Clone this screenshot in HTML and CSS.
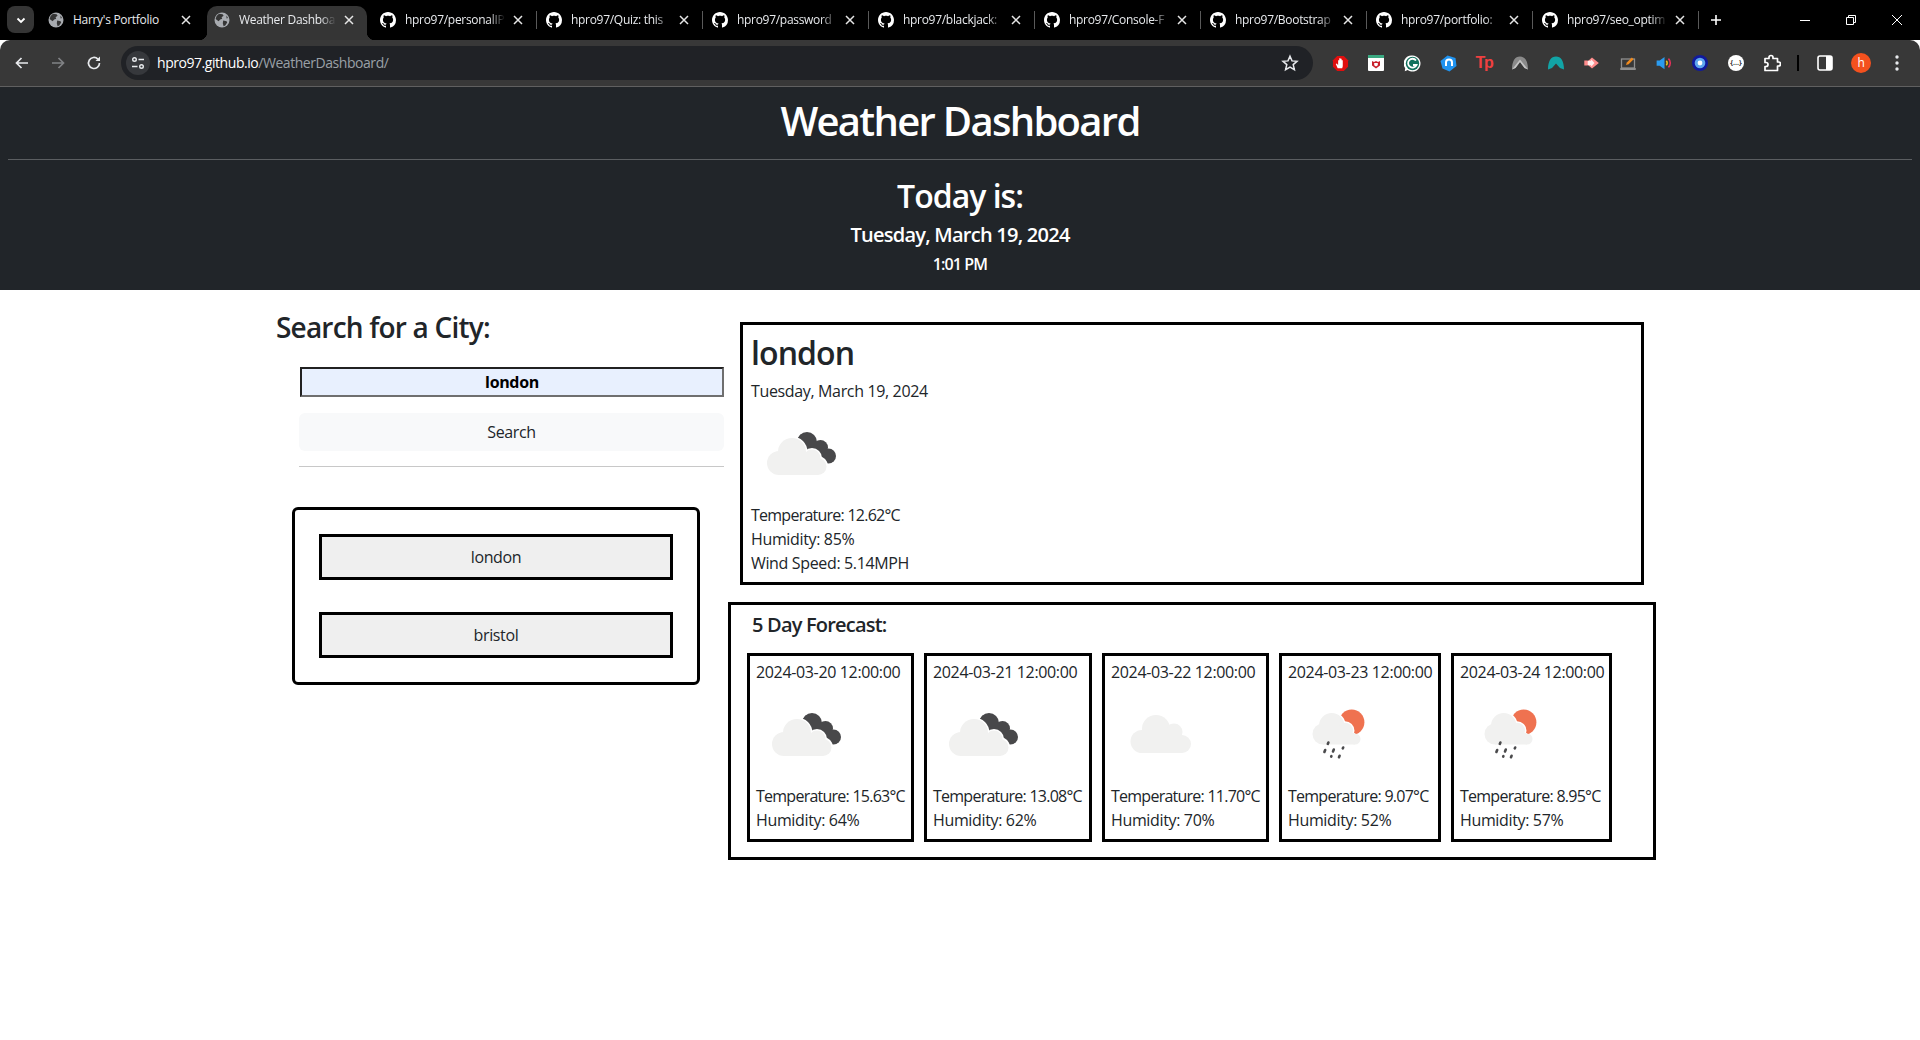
FILE: index.html
```html
<!DOCTYPE html>
<html lang="en">
<head>
    <meta charset="UTF-8">
    <meta name="viewport" content="width=device-width, initial-scale=1.0">
    <title>Weather Dashboard</title>
    <link rel="stylesheet" href="styles.css">
</head>
<body>

    <!-- Shared icons -->
    <svg class="defs" width="0" height="0">
        <symbol id="github" viewBox="0 0 16 16"><path fill="#fff" d="M8 0C3.58 0 0 3.58 0 8c0 3.54 2.29 6.53 5.47 7.59.4.07.55-.17.55-.38 0-.19-.01-.82-.01-1.49-2.01.37-2.53-.49-2.69-.94-.09-.23-.48-.94-.82-1.13-.28-.15-.68-.52-.01-.53.63-.01 1.08.58 1.23.82.72 1.21 1.87.87 2.33.66.07-.52.28-.87.51-1.07-1.78-.2-3.64-.89-3.64-3.95 0-.87.31-1.59.82-2.15-.08-.2-.36-1.02.08-2.12 0 0 .67-.21 2.2.82.64-.18 1.32-.27 2-.27.68 0 1.36.09 2 .27 1.53-1.04 2.2-.82 2.2-.82.44 1.1.16 1.92.08 2.12.51.56.82 1.27.82 2.15 0 3.07-1.87 3.75-3.65 3.95.29.25.54.73.54 1.48 0 1.07-.01 1.93-.01 2.2 0 .21.15.46.55.38A8.013 8.013 0 0016 8c0-4.42-3.58-8-8-8z"/></symbol>
        <symbol id="globe" viewBox="0 0 16 16"><circle cx="8" cy="8" r="7.5" fill="#a8abb0"/><path fill="#353535" d="M5 1.8l3.6.4 1 1.6-2 1.4.6 1.6-2 .6-1.6 1.8L1.6 7l1-3zM9.2 8.6l3.4.6.6 1.4-2 3-1.6.6-.8-3zM12.4 3.6l1.6 2.4-1.4.4z"/></symbol>
        <symbol id="close" viewBox="0 0 10 10"><path d="M1 1l8 8M9 1l-8 8" stroke="#e6e6e6" stroke-width="1.5" fill="none"/></symbol>
        <symbol id="clouds" viewBox="0 0 100 100">
            <g fill="#48484a"><circle cx="56" cy="38" r="10"/><circle cx="69.500" cy="43.500" r="7.500"/><circle cx="77.500" cy="52" r="7.500"/><path d="M50 30L66 38 75 47 82 56 60 62 47 34z"/></g>
            <g fill="#fff"><circle cx="41" cy="48" r="15.500"/><circle cx="61" cy="54" r="10"/><circle cx="67" cy="62" r="10"/></g>
            <g fill="#f1f1f0"><circle cx="28" cy="59" r="12"/><circle cx="41" cy="48" r="14"/><circle cx="61" cy="54" r="8.500"/><circle cx="67" cy="62.500" r="8.500"/><rect x="28" y="55" width="39" height="16"/></g>
        </symbol>
        <symbol id="cloud" viewBox="0 0 100 100">
            <g fill="#f1f1f0"><circle cx="31" cy="56.500" r="11.500"/><circle cx="45" cy="44" r="14"/><circle cx="63" cy="47" r="8.500"/><circle cx="71" cy="59" r="9"/><rect x="31" y="50" width="40" height="18"/></g>
        </symbol>
        <symbol id="rain" viewBox="0 0 100 100">
            <circle cx="63.700" cy="37.300" r="12.700" fill="#ef7250"/>
            <g fill="#fff"><circle cx="43.700" cy="40.700" r="14"/><circle cx="57" cy="45.700" r="9.500"/></g>
            <g fill="#f1f1f0"><circle cx="35" cy="49" r="10.500"/><circle cx="43.700" cy="40.700" r="12.700"/><circle cx="57" cy="45.700" r="8"/><circle cx="67" cy="54" r="5.500"/><rect x="35" y="48" width="32" height="11.500"/></g>
            <g stroke="#4a4a4c" stroke-width="2.600" stroke-linecap="round"><path d="M40.400 57.500l-.6 1.400M37.200 65l-.8 2M45.800 64.500l-.8 2M55.200 62.500l-.4.800M43.400 71.200l-.2.400M51.600 70.800l-.6 1.400"/></g>
        </symbol>
    </svg>

    <!-- Browser tabs -->
    <div class="tabstrip">
        <div class="tab-search"><svg width="10" height="10" viewBox="0 0 10 10"><path d="M1.500 3.500L5 7l3.500-3.500" stroke="#fff" stroke-width="1.800" fill="none"/></svg></div>
        <div class="tab tab-first">
            <svg class="fav"><use href="#globe"/></svg><span class="tab-title">Harry's Portfolio</span><svg class="tab-close"><use href="#close"/></svg>
        </div>
        <div class="sep sep-clear"></div>
        <div class="tab tab-active">
            <svg class="fav"><use href="#globe"/></svg><span class="tab-title">Weather Dashboa</span><svg class="tab-close"><use href="#close"/></svg>
        </div>
        <div class="sep sep-clear"></div>
        <div class="tab"><svg class="fav"><use href="#github"/></svg><span class="tab-title">hpro97/personalIP</span><svg class="tab-close"><use href="#close"/></svg></div>
        <div class="sep"></div>
        <div class="tab"><svg class="fav"><use href="#github"/></svg><span class="tab-title">hpro97/Quiz: this</span><svg class="tab-close"><use href="#close"/></svg></div>
        <div class="sep"></div>
        <div class="tab"><svg class="fav"><use href="#github"/></svg><span class="tab-title">hpro97/password</span><svg class="tab-close"><use href="#close"/></svg></div>
        <div class="sep"></div>
        <div class="tab"><svg class="fav"><use href="#github"/></svg><span class="tab-title">hpro97/blackjack:</span><svg class="tab-close"><use href="#close"/></svg></div>
        <div class="sep"></div>
        <div class="tab"><svg class="fav"><use href="#github"/></svg><span class="tab-title">hpro97/Console-F</span><svg class="tab-close"><use href="#close"/></svg></div>
        <div class="sep"></div>
        <div class="tab"><svg class="fav"><use href="#github"/></svg><span class="tab-title">hpro97/Bootstrap</span><svg class="tab-close"><use href="#close"/></svg></div>
        <div class="sep"></div>
        <div class="tab"><svg class="fav"><use href="#github"/></svg><span class="tab-title">hpro97/portfolio:</span><svg class="tab-close"><use href="#close"/></svg></div>
        <div class="sep"></div>
        <div class="tab"><svg class="fav"><use href="#github"/></svg><span class="tab-title">hpro97/seo_optim</span><svg class="tab-close"><use href="#close"/></svg></div>
        <div class="sep"></div>
        <div class="tab-new"><svg width="12" height="12" viewBox="0 0 12 12"><path d="M6 1v10M1 6h10" stroke="#fff" stroke-width="1.600"/></svg></div>
        <div class="window-controls">
            <svg width="46" height="12" viewBox="0 0 46 12"><path d="M18 6.500h10" stroke="#fff"/></svg>
            <svg width="46" height="12" viewBox="0 0 46 12"><path d="M18.500 3.500h7v7h-7zM20.500 3.500v-2h7v7h-2" stroke="#fff" fill="none"/></svg>
            <svg width="46" height="12" viewBox="0 0 46 12"><path d="M18 1l10 10M28 1L18 11" stroke="#fff" fill="none"/></svg>
        </div>
    </div>

    <!-- Browser toolbar -->
    <div class="toolbar">
        <div class="slot"><svg width="16" height="16" viewBox="0 0 16 16"><path d="M14 8H3M7.500 3L2.500 8l5 5" stroke="#e8eaed" stroke-width="1.700" fill="none"/></svg></div>
        <div class="slot"><svg width="16" height="16" viewBox="0 0 16 16"><path d="M2 8h11M8.500 3l5 5-5 5" stroke="#808285" stroke-width="1.700" fill="none"/></svg></div>
        <div class="slot"><svg width="16" height="16" viewBox="0 0 16 16"><path d="M13.500 8a5.500 5.500 0 1 1-1.600-3.900" stroke="#e8eaed" stroke-width="1.700" fill="none"/><path d="M14 1.500v4.500H9.500z" fill="#e8eaed"/></svg></div>
        <div class="address">
            <div class="site-chip"><svg width="14" height="14" viewBox="0 0 14 14"><g stroke="#e8eaed" stroke-width="1.400" fill="none"><circle cx="3.500" cy="3.500" r="1.800"/><path d="M7.500 3.500H13M1 10.500h5.500"/><circle cx="10.500" cy="10.500" r="1.800"/></g></svg></div>
            <span class="url">hpro97.github.io<span class="url-path">/WeatherDashboard/</span></span>
            <svg class="star" width="18" height="18" viewBox="0 0 18 18"><path d="M9 2.200l2 4.700 5 .4-3.800 3.300 1.200 5L9 13l-4.400 2.600 1.200-5L2 7.300l5-.4z" stroke="#e8eaed" stroke-width="1.500" fill="none"/></svg>
        </div>
        <div class="extensions">
            <div class="slot"><svg width="17" height="17" viewBox="0 0 18 18"><path d="M5.500 1h7L17 5.500v7L12.500 17h-7L1 12.500v-7z" fill="#e00f0f"/><path d="M6 14L4 9.500l1.200-.5 1.300 1.800V5.500h1.200V8.500V3.500H9v5V4h1.200v4.500-3h1.200v6.500L10.800 14z" fill="#fff"/></svg></div>
            <div class="slot"><svg width="16" height="16" viewBox="0 0 16 16"><rect width="16" height="16" rx="1" fill="#fff"/><rect width="16" height="3" fill="#3aa981"/><path d="M4 6l2 1 2-1 2 1 2-1v4.500L8 13.500 4 10.500z" fill="#c8202b"/><path d="M6.200 8h3.600v2.200L8 11.500 6.200 10.200z" fill="#fff"/></svg></div>
            <div class="slot"><svg width="17" height="17" viewBox="0 0 17 17"><path d="M8.500.5a8 8 0 1 1-4.800 14.400L.8 16.200l.4-3A8 8 0 0 1 8.500.5z" fill="#fff"/><circle cx="8.500" cy="8.500" r="6.700" fill="#11705c"/><path d="M12 5.500A4.400 4.400 0 1 0 12.500 10H9" stroke="#fff" stroke-width="1.800" fill="none"/></svg></div>
            <div class="slot"><svg width="17" height="17" viewBox="0 0 17 17"><path d="M7.500.5L15.500 3 16.500 11 9.500 16.500 2.500 13.500.5 6z" fill="#2093ef"/><path d="M6 11V7.500a3 3 0 0 1 6 0V11" stroke="#fff" stroke-width="2" fill="none"/></svg></div>
            <div class="slot"><span class="ext-tp">Tp</span></div>
            <div class="slot"><svg width="16" height="14" viewBox="0 0 16 14"><path d="M0 13.500C0 5 3 .5 8 .5S16 5 16 13.500L12.500 12 8 6 3.500 12z" fill="#8a8a8a"/><path d="M0 13.500L3.500 12 8 6l4.500 6 3.500 1.500L8 3.500z" fill="#c4c4c4"/></svg></div>
            <div class="slot"><svg width="16" height="14" viewBox="0 0 16 14"><path d="M0 13.500C0 5 3 .5 8 .5S16 5 16 13.500L12 12 8 7.500 4 12z" fill="#12a4a6"/></svg></div>
            <div class="slot"><svg width="16" height="12" viewBox="0 0 18 14"><path d="M0 4h4V5L9 0.500 17 7 9 13.500 4 9v1H0z" fill="#ff8c8c"/><path d="M4 4.500h4V2.500L12 7 8 11.500V9.500H4z" fill="#fff" fill-opacity=".85"/></svg></div>
            <div class="slot"><svg width="16" height="16" viewBox="0 0 16 16"><rect x="1.500" y="4" width="13" height="9" fill="none" stroke="#8f8f8f" stroke-width="1.300"/><rect x="0" y="13" width="16" height="2" rx="1" fill="#8f8f8f"/><path d="M6 10l.8-2.500 5-5 1.800 1.800-5 5z" fill="#f08a1d"/></svg></div>
            <div class="slot"><svg width="17" height="14" viewBox="0 0 18 16"><path d="M0 5h3.500L9 1v14L3.500 11H0z" fill="#2a9bf0"/><path d="M11 5.500a3.500 3.500 0 0 1 0 5" stroke="#f0c419" stroke-width="1.800" fill="none"/><path d="M13.500 3a7 7 0 0 1 0 10" stroke="#e8305b" stroke-width="1.800" fill="none"/></svg></div>
            <div class="slot"><svg width="16" height="16" viewBox="0 0 16 16"><circle cx="8" cy="8" r="8" fill="#101a9e"/><circle cx="8" cy="8" r="5.300" fill="#5ea7ee"/><circle cx="8" cy="8" r="2.400" fill="#fff"/></svg></div>
            <div class="slot"><span class="ext-dots">{...}</span></div>
            <div class="slot"><svg width="18" height="18" viewBox="0 0 18 18"><path d="M2 4.500h4V3.500a2 2 0 0 1 4 0v1h4.500V8h1a2 2 0 0 1 0 4h-1v4.500H2V12.500h1a2 2 0 0 0 0-4H2z" stroke="#fff" stroke-width="1.700" fill="none" stroke-linejoin="round"/></svg></div>
        </div>
        <div class="tool-divider"></div>
        <div class="slot"><svg width="16" height="16" viewBox="0 0 16 16"><rect x="1" y="1" width="14" height="14" rx="2" fill="none" stroke="#fff" stroke-width="1.600"/><rect x="9" y="1" width="6" height="14" fill="#fff"/></svg></div>
        <div class="slot"><span class="avatar">h</span></div>
        <div class="slot"><svg width="4" height="16" viewBox="0 0 4 16"><g fill="#e8eaed"><circle cx="2" cy="2" r="1.700"/><circle cx="2" cy="8" r="1.700"/><circle cx="2" cy="14" r="1.700"/></g></svg></div>
    </div>

    <!-- Page header -->
    <header class="page-header">
        <h1>Weather Dashboard</h1>
        <hr>
        <h2>Today is:</h2>
        <p class="today-date">Tuesday, March 19, 2024</p>
        <p class="today-time">1:01 PM</p>
    </header>

    <main class="content">
        <!-- Search column -->
        <section class="search-col">
            <h3>Search for a City:</h3>
            <form class="search-form">
                <input type="text" class="city-input" value="london">
                <button type="button" class="search-btn">Search</button>
                <hr>
            </form>
            <div class="history">
                <button type="button" class="history-btn">london</button>
                <button type="button" class="history-btn">bristol</button>
            </div>
        </section>

        <!-- Weather column -->
        <section class="weather-col">
            <div class="current">
                <h2>london</h2>
                <p>Tuesday, March 19, 2024</p>
                <svg class="weather-icon"><use href="#clouds"/></svg>
                <p class="temp">Temperature: 12.62°C</p>
                <p>Humidity: 85%</p>
                <p>Wind Speed: 5.14MPH</p>
            </div>
            <div class="forecast">
                <h5>5 Day Forecast:</h5>
                <div class="forecast-days">
                    <div class="day">
                        <p>2024-03-20 12:00:00</p>
                        <svg class="weather-icon"><use href="#clouds"/></svg>
                        <p class="temp">Temperature: 15.63°C</p>
                        <p>Humidity: 64%</p>
                    </div>
                    <div class="day">
                        <p>2024-03-21 12:00:00</p>
                        <svg class="weather-icon"><use href="#clouds"/></svg>
                        <p class="temp">Temperature: 13.08°C</p>
                        <p>Humidity: 62%</p>
                    </div>
                    <div class="day">
                        <p>2024-03-22 12:00:00</p>
                        <svg class="weather-icon"><use href="#cloud"/></svg>
                        <p class="temp">Temperature: 11.70°C</p>
                        <p>Humidity: 70%</p>
                    </div>
                    <div class="day">
                        <p>2024-03-23 12:00:00</p>
                        <svg class="weather-icon"><use href="#rain"/></svg>
                        <p class="temp">Temperature: 9.07°C</p>
                        <p>Humidity: 52%</p>
                    </div>
                    <div class="day">
                        <p>2024-03-24 12:00:00</p>
                        <svg class="weather-icon"><use href="#rain"/></svg>
                        <p class="temp">Temperature: 8.95°C</p>
                        <p>Humidity: 57%</p>
                    </div>
                </div>
            </div>
        </section>
    </main>
</body>
</html>
```

FILE: styles.css
```css
body {
    margin: 0;
    font-family: "Open Sans", "Noto Sans", sans-serif;
    font-size: 16px;
    line-height: 24px;
    color: #212529;
    background-color: #fff;
    letter-spacing: -0.35px;
}
p, h1, h2, h3, h5 {
    margin: 0;
}
.defs {
    display: block;
    height: 0;
}

/* Browser tabs */
.tabstrip {
    display: flex;
    align-items: flex-end;
    height: 40px;
    background-color: #000;
    color: #e8eaed;
    font-size: 12px;
    letter-spacing: -0.3px;
}
.tab-search {
    display: flex;
    align-items: center;
    justify-content: center;
    width: 27px;
    height: 27px;
    margin: 0 7px 7px 7px;
    border-radius: 8px;
    background-color: #353535;
}
.tab {
    position: relative;
    display: flex;
    align-items: center;
    width: 163px;
    height: 34px;
    padding: 0 10px 6px 7px;
    box-sizing: border-box;
}
.tab-active {
    width: 160px;
    margin-right: 3px;
    border-radius: 10px 10px 0 0;
    background-color: #353535;
}
.tab-active::before,
.tab-active::after {
    content: "";
    position: absolute;
    bottom: 0;
    width: 8px;
    height: 8px;
}
.tab-active::before {
    left: -8px;
    background: radial-gradient(circle at 0 0, transparent 8px, #353535 8.5px);
}
.tab-active::after {
    right: -8px;
    background: radial-gradient(circle at 100% 0, transparent 8px, #353535 8.5px);
}
.fav {
    flex: none;
    width: 16px;
    height: 16px;
    margin-right: 9px;
}
.tab-title {
    flex: 1;
    overflow: hidden;
    white-space: nowrap;
    -webkit-mask-image: linear-gradient(to right, #000 84%, transparent 100%);
    mask-image: linear-gradient(to right, #000 84%, transparent 100%);
}
.tab-first .tab-title {
    -webkit-mask-image: none;
    mask-image: none;
}
.tab-close {
    flex: none;
    width: 10px;
    height: 10px;
    margin-left: 8px;
    margin-right: 3px;
}
.sep {
    flex: none;
    align-self: flex-end;
    width: 1px;
    height: 18px;
    margin: 0 2px 11px 0;
    background-color: #5a5a5a;
}
.sep-clear {
    background-color: transparent;
}
.tab-new {
    display: flex;
    align-items: center;
    justify-content: center;
    width: 24px;
    height: 26px;
    margin: 0 0 7px 3px;
}
.window-controls {
    display: flex;
    align-items: center;
    margin-left: auto;
    height: 40px;
    align-self: flex-start;
}

/* Browser toolbar */
.toolbar {
    display: flex;
    align-items: center;
    box-sizing: border-box;
    height: 47px;
    padding: 0 4px;
    background-color: #383838;
    border-bottom: 1px solid #606060;
    border-radius: 10px 10px 0 0;
    color: #e8eaed;
}
.slot {
    flex: none;
    display: flex;
    align-items: center;
    justify-content: center;
    width: 36px;
    height: 36px;
}
.address {
    display: flex;
    align-items: center;
    width: 1192px;
    height: 34px;
    margin-left: 9px;
    border-radius: 17px;
    background-color: #202226;
    font-size: 14px;
}
.site-chip {
    display: flex;
    align-items: center;
    justify-content: center;
    width: 24px;
    height: 24px;
    margin: 0 7px 0 5px;
    border-radius: 50%;
    background-color: #36383c;
}
.url {
    flex: 1;
    color: #fff;
    letter-spacing: -0.45px;
}
.url-path {
    color: #9aa0a6;
}
.star {
    margin-right: 14px;
}
.extensions {
    display: flex;
    margin-left: 9px;
}
.ext-tp {
    font-family: "Liberation Sans", sans-serif;
    font-size: 16px;
    font-weight: 700;
    color: #f04040;
    letter-spacing: -1.2px;
}
.ext-dots {
    display: flex;
    align-items: center;
    justify-content: center;
    width: 16px;
    height: 16px;
    border-radius: 50%;
    background-color: #fff;
    color: #333;
    font-size: 7px;
    font-weight: 700;
    letter-spacing: 0;
}
.tool-divider {
    flex: none;
    width: 2px;
    height: 16px;
    margin: 0 8px 0 7px;
    background-color: #000;
}
.avatar {
    display: flex;
    align-items: center;
    justify-content: center;
    width: 20px;
    height: 20px;
    border-radius: 50%;
    background-color: #f4511e;
    color: #fff;
    font-size: 12px;
}

/* Page header */
.page-header {
    height: 203px;
    padding-top: 10px;
    box-sizing: border-box;
    background-color: #212529;
    color: #fff;
    text-align: center;
}
.page-header h1 {
    font-size: 40px;
    font-weight: 600;
    line-height: 48px;
    margin-bottom: 14px;
    letter-spacing: -1.7px;
}
.page-header hr {
    height: 1px;
    margin: 0 8px;
    border: 0;
    background-color: #5b5e61;
}
.page-header h2 {
    margin-top: 17px;
    font-size: 32px;
    font-weight: 600;
    line-height: 38px;
    letter-spacing: -1px;
}
.today-date {
    margin-top: 8px;
    font-size: 20px;
    font-weight: 600;
    letter-spacing: -0.75px;
}
.today-time {
    margin-top: 5px;
    font-weight: 600;
    letter-spacing: -0.9px;
}

/* Main layout */
.content {
    display: flex;
    padding-left: 276px;
}
.search-col {
    flex: none;
    width: 452px;
    padding-top: 20px;
    box-sizing: border-box;
}
.search-col h3 {
    font-size: 28px;
    font-weight: 600;
    line-height: 34px;
    margin-bottom: 23px;
    letter-spacing: -0.8px;
}
.search-form {
    width: 425px;
    margin-left: 23px;
}
.search-form hr {
    height: 1px;
    margin: 15px 0 0;
    border: 0;
    background-color: #c8c8c8;
}
.city-input {
    display: block;
    box-sizing: border-box;
    width: 424px;
    height: 30px;
    margin: 0 0 16px 1px;
    padding: 0;
    border: 2px solid;
    border-color: #212121 #6f6f6f #6f6f6f #212121;
    background-color: #e8f0fe;
    color: #000;
    font-family: inherit;
    font-size: 16px;
    font-weight: 700;
    letter-spacing: -0.35px;
    text-align: center;
}
.search-btn {
    display: block;
    width: 425px;
    height: 38px;
    padding: 0;
    border: 0;
    border-radius: 6px;
    background-color: #f8f9fa;
    color: #212529;
    font-family: inherit;
    font-size: 16px;
    letter-spacing: -0.35px;
}
.history {
    display: flex;
    flex-direction: column;
    gap: 32px;
    box-sizing: border-box;
    width: 408px;
    height: 178px;
    margin: 40px 0 0 16px;
    padding: 24px;
    border: 3px solid #000;
    border-radius: 6px;
}
.history-btn {
    height: 46px;
    padding: 0;
    border: 3px solid #000;
    background-color: #efefef;
    color: #212529;
    font-family: inherit;
    font-size: 16px;
    letter-spacing: -0.35px;
}
.weather-col {
    flex: none;
    width: 928px;
    padding-top: 32px;
}
.current {
    box-sizing: border-box;
    width: 904px;
    height: 263px;
    margin-left: 12px;
    padding: 9px 8px;
    border: 3px solid #000;
}
.current h2 {
    font-size: 32px;
    font-weight: 600;
    line-height: 38px;
    margin-bottom: 7px;
    letter-spacing: -0.9px;
}
.weather-icon {
    display: block;
    width: 100px;
    height: 100px;
    margin: 1px 0 -1px;
}
.temp {
    letter-spacing: -0.75px;
}
.forecast {
    box-sizing: border-box;
    height: 258px;
    margin-top: 17px;
    padding: 8px 16px;
    border: 3px solid #000;
}
.forecast h5 {
    margin: 0 0 16px 5px;
    font-size: 20px;
    font-weight: 600;
    line-height: 24px;
    letter-spacing: -0.8px;
}
.forecast-days {
    display: grid;
    grid-template-columns: 167px 168px 167px 162px 161px;
    gap: 10px;
}
.day {
    box-sizing: border-box;
    height: 189px;
    padding: 4px 6px 6px;
    border: 3px solid #000;
    white-space: nowrap;
}
```
